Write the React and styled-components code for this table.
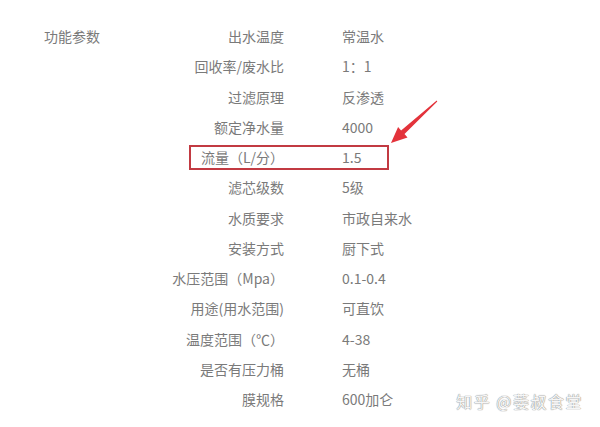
import React from "react";
import styled, { createGlobalStyle } from "styled-components";

const Global = createGlobalStyle`
  html, body { margin: 0; padding: 0; background: #fff; }
  body { font-family: "Noto Sans CJK SC", "Microsoft YaHei", sans-serif; }
`;

const Page = styled.div`
  position: relative;
  width: 600px;
  height: 427px;
  overflow: hidden;
  background: #fff;
  padding-top: 21px;
  box-sizing: border-box;
`;

const Table = styled.div`
  display: grid;
  grid-template-columns: 44px 110px 130px 58px 1fr;
  grid-auto-rows: 30.25px;
  font-size: 14px;
  color: #7a7a7a;
  align-items: center;
`;

const Section = styled.div`
  grid-column: 2;
  grid-row: 1;
  line-height: 30px;
`;

const Label = styled.div`
  grid-column: 3;
  grid-row: ${(p) => p.$row};
  text-align: right;
  white-space: nowrap;
  line-height: 30px;
`;

const Value = styled.div`
  grid-column: 5;
  grid-row: ${(p) => p.$row};
  white-space: nowrap;
  line-height: 30px;
`;

const Highlight = styled.div`
  position: absolute;
  left: 189px;
  top: 145px;
  width: 200px;
  height: 25px;
  border: 2px solid #c23a42;
  box-sizing: border-box;
  pointer-events: none;
`;

const Arrow = styled.svg`
  position: absolute;
  left: 385px;
  top: 95px;
  width: 60px;
  height: 55px;
`;

const Watermark = styled.div`
  position: absolute;
  right: 17px;
  bottom: 14px;
  font-size: 16px;
  color: #f6f6f6;
  letter-spacing: 1.5px;
  text-shadow: 0 0 1px #8a8a8a, 0 0 1px #8a8a8a;
  white-space: nowrap;
`;

const rows = [
  ["出水温度", "常温水"],
  ["回收率/废水比", "1：1"],
  ["过滤原理", "反渗透"],
  ["额定净水量", "4000"],
  ["流量（L/分）", "1.5"],
  ["滤芯级数", "5级"],
  ["水质要求", "市政自来水"],
  ["安装方式", "厨下式"],
  ["水压范围（Mpa）", "0.1-0.4"],
  ["用途(用水范围)", "可直饮"],
  ["温度范围（℃）", "4-38"],
  ["是否有压力桶", "无桶"],
  ["膜规格", "600加仑"],
];

export default function App() {
  return (
    <>
      <Global />
      <Page>
        <Table>
          <Section>功能参数</Section>
          {rows.map(([l, v], i) => (
            <React.Fragment key={i}>
              <Label $row={i + 1}>{l}</Label>
              <Value $row={i + 1}>{v}</Value>
            </React.Fragment>
          ))}
        </Table>
        <Highlight />
        <Arrow viewBox="385 95 60 55">
          <polygon
            points="437.3,101.4 404.5,134.0 407.5,137.4 391,143 398.1,127.0 401.1,130.4 436.7,100.6"
            fill="#e3333b"
          />
        </Arrow>
        <Watermark>知乎 @萎叔食堂</Watermark>
      </Page>
    </>
  );
}
